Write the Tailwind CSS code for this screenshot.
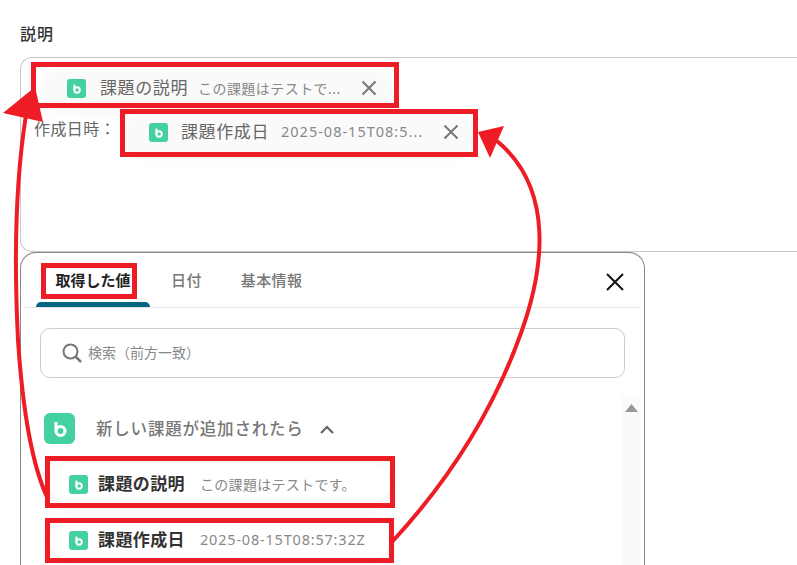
<!DOCTYPE html>
<html lang="ja">
<head>
    <meta charset="UTF-8">
    <title>説明</title>
    <script src="https://cdn.jsdelivr.net/npm/@tailwindcss/browser@4"></script>
</head>
<body class="bg-white font-['Noto_Sans','Noto_Sans_CJK_JP',sans-serif]">
    <div class="relative w-[797px] h-[565px] overflow-hidden bg-white">
        <!-- Field label -->
        <div class="pl-5 pt-[22px] h-[57px] text-[16px] leading-[24px] font-medium tracking-[1px] text-[#333]">説明</div>

        <!-- Field box with chips -->
        <div class="ml-5 h-[195px] border border-r-0 border-[#c8c8c8] rounded-l-xl pt-[11px] flex flex-col gap-[6px]">
            <div class="ml-[23px] w-[345px] h-[38px] shrink-0 rounded-full bg-[#fafafa] shadow-[0_4px_14px_rgba(0,0,0,0.05)] flex items-center pl-[23px]">
                <svg class="w-[19px] h-[19px] shrink-0" viewBox="0 0 19 19"><rect width="19" height="19" rx="3" fill="#42d19f"/><path d="M7.350 5.500V11" fill="none" stroke="#fff" stroke-width="1.900"/><circle cx="10.100" cy="11" r="2.750" fill="none" stroke="#fff" stroke-width="1.900"/></svg>
                <span class="ml-[14px] text-[17px] tracking-[0.6px] text-[#666] whitespace-nowrap">課題の説明</span>
                <span class="ml-[10px] text-[14px] tracking-[0.45px] text-[#888] whitespace-nowrap">この課題はテストで...</span>
                <svg class="ml-auto mr-[12px] w-4 h-4 shrink-0" viewBox="0 0 16 16"><path d="M1.500 1.500l13 13M14.500 1.500l-13 13" stroke="#777" stroke-width="2"/></svg>
            </div>
            <div class="flex items-start">
                <span class="ml-[13px] w-[93px] shrink-0 text-[16px] leading-[32px] tracking-[0.4px] text-[#666] whitespace-nowrap">作成日時：</span>
                <div class="w-[344px] h-[38px] shrink-0 rounded-full bg-[#fafafa] shadow-[0_4px_14px_rgba(0,0,0,0.05)] flex items-center pl-[22px]">
                    <svg class="w-[19px] h-[19px] shrink-0" viewBox="0 0 19 19"><rect width="19" height="19" rx="3" fill="#42d19f"/><path d="M7.350 5.500V11" fill="none" stroke="#fff" stroke-width="1.900"/><circle cx="10.100" cy="11" r="2.750" fill="none" stroke="#fff" stroke-width="1.900"/></svg>
                    <span class="ml-[13px] text-[17px] tracking-[0.6px] text-[#666] whitespace-nowrap">課題作成日</span>
                    <span class="ml-[12px] text-[14.500px] tracking-[1px] text-[#888] whitespace-nowrap">2025-08-15T08:5...</span>
                    <svg class="ml-auto mr-[12px] w-4 h-4 shrink-0" viewBox="0 0 16 16"><path d="M1.500 1.500l13 13M14.500 1.500l-13 13" stroke="#777" stroke-width="2"/></svg>
                </div>
            </div>
        </div>

        <!-- Value picker panel -->
        <div class="ml-5 w-[625px] h-[320px] border border-b-0 border-[#888] rounded-t-2xl bg-white">
            <div class="relative mx-1 h-[55px] border-b border-[#e4e4e4] flex items-center text-[15px] tracking-[0.4px]">
                <div class="relative ml-[11px] w-[114px] h-full flex items-center justify-center font-bold tracking-[0px] text-[#222]">
                    取得した値
                    <div class="absolute left-0 right-0 bottom-0 h-[5px] rounded-t-md bg-[#00677f]"></div>
                </div>
                <span class="ml-[21px] font-medium text-[#777]">日付</span>
                <span class="ml-[39px] font-medium text-[#777]">基本情報</span>
                <svg class="absolute right-[16px] top-[20px] w-[18px] h-[18px]" viewBox="0 0 18 18"><path d="M1 1l16 16M17 1L1 17" stroke="#111" stroke-width="2"/></svg>
            </div>

            <div class="mt-[20px] ml-[19px] w-[585px] h-[50px] border border-[#ccc] rounded-[10px] flex items-center pl-[21px]">
                <svg class="w-5 h-5 shrink-0" viewBox="0 0 20 20"><circle cx="8.500" cy="8.500" r="7" fill="none" stroke="#777" stroke-width="2"/><path d="M13.500 13.500l5.500 5.500" stroke="#777" stroke-width="2.500"/></svg>
                <span class="ml-[6px] pb-[2px] text-[14px] text-[#888]">検索（前方一致）</span>
            </div>

            <div class="mt-[18px] flex">
                <div class="w-[601px] pt-[17px] pl-[23px]">
                    <div class="flex items-center h-[31px]">
                        <svg class="w-[31px] h-[31px] shrink-0" viewBox="0 0 31 31"><rect width="31" height="31" rx="6" fill="#42d19f"/><path d="M12 9v9" fill="none" stroke="#fff" stroke-width="3.100"/><circle cx="16.500" cy="18" r="4.500" fill="none" stroke="#fff" stroke-width="3.100"/></svg>
                        <span class="ml-[21px] pt-[2px] text-[16.500px] font-medium tracking-[0.8px] text-[#777] whitespace-nowrap">新しい課題が追加されたら</span>
                        <svg class="ml-[16px] mt-[2px] w-[14px] h-[9px]" viewBox="0 0 14 9"><path d="M1 8l6-6 6 6" fill="none" stroke="#666" stroke-width="2.200"/></svg>
                    </div>
                    <div class="ml-[6px] mt-[20px] w-[340px] h-[40px] rounded-full bg-white shadow-[0_2px_16px_rgba(0,0,0,0.07)] flex items-center pl-[19px]">
                        <svg class="w-[19px] h-[19px] shrink-0" viewBox="0 0 19 19"><rect width="19" height="19" rx="3" fill="#42d19f"/><path d="M7.350 5.500V11" fill="none" stroke="#fff" stroke-width="1.900"/><circle cx="10.100" cy="11" r="2.750" fill="none" stroke="#fff" stroke-width="1.900"/></svg>
                        <span class="ml-[10px] text-[17px] font-bold tracking-[0.4px] text-[#333] whitespace-nowrap">課題の説明</span>
                        <span class="ml-[15px] text-[14px] tracking-[0.3px] text-[#888] whitespace-nowrap">この課題はテストです。</span>
                    </div>
                    <div class="ml-[6px] mt-[16px] w-[340px] h-[40px] rounded-full bg-white shadow-[0_2px_16px_rgba(0,0,0,0.07)] flex items-center pl-[19px]">
                        <svg class="w-[19px] h-[19px] shrink-0" viewBox="0 0 19 19"><rect width="19" height="19" rx="3" fill="#42d19f"/><path d="M7.350 5.500V11" fill="none" stroke="#fff" stroke-width="1.900"/><circle cx="10.100" cy="11" r="2.750" fill="none" stroke="#fff" stroke-width="1.900"/></svg>
                        <span class="ml-[10px] text-[17px] font-bold tracking-[0.4px] text-[#333] whitespace-nowrap">課題作成日</span>
                        <span class="ml-[15px] text-[14.500px] tracking-[0.8px] text-[#888] whitespace-nowrap">2025-08-15T08:57:32Z</span>
                    </div>
                </div>
                <!-- Scrollbar -->
                <div class="w-[18px] h-[170px] bg-[#fafafa] pt-[8px] flex justify-center">
                    <svg class="w-[13px] h-2" viewBox="0 0 13 8"><path d="M6.500 0L13 8H0z" fill="#999"/></svg>
                </div>
            </div>
        </div>

        <!-- Red annotations drawn over the screenshot -->
        <svg class="absolute inset-0 pointer-events-none" width="797" height="565" viewBox="0 0 797 565" fill="none">
            <g stroke="#ee1c25" stroke-width="5">
                <rect x="33.500" y="64.500" width="363" height="41"/>
                <rect x="122.500" y="111.500" width="353" height="43"/>
                <rect x="43.500" y="265.500" width="91" height="31"/>
                <rect x="47.500" y="458.500" width="345" height="47"/>
                <rect x="47.500" y="520.500" width="344" height="40"/>
            </g>
            <g stroke="#ee1c25" stroke-width="4">
                <path d="M47 497C30 460 22 400 18 340C15 280 14 190 26 115"/>
                <path d="M392 542C440 490 490 420 521 333C543 272 556 190 497 141"/>
            </g>
            <path d="M3 113L35 87L43 122Z" fill="#ee1c25"/>
            <path d="M478 132L504 126L490 158Z" fill="#ee1c25"/>
        </svg>
    </div>
</body>
</html>
